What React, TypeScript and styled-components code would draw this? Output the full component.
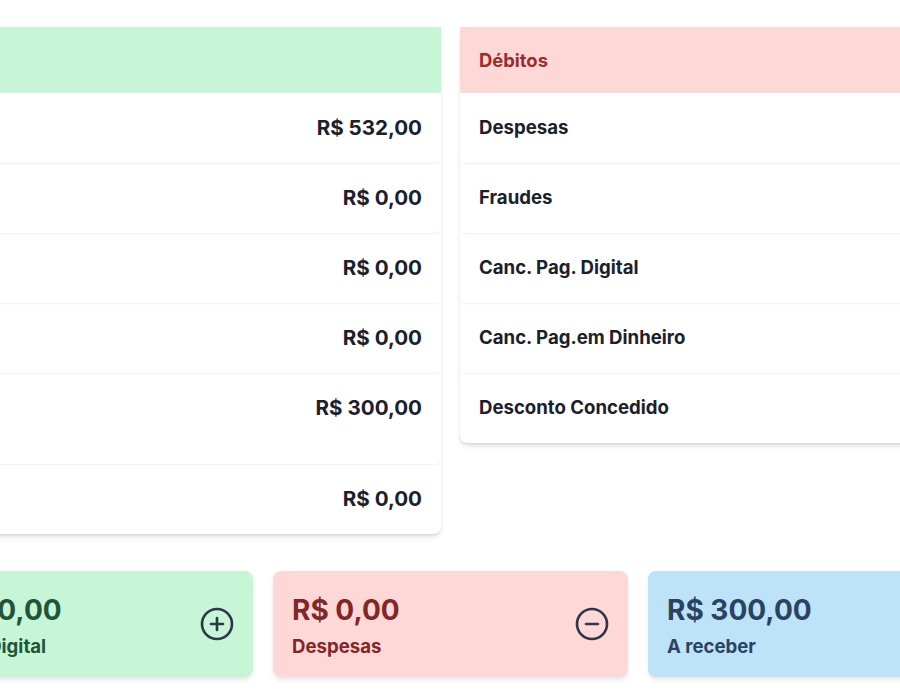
import React from "react";
import styled, { createGlobalStyle } from "styled-components";
import { CirclePlus, CircleMinus } from "lucide-react";

const Global = createGlobalStyle`
  html, body { margin: 0; padding: 0; background: #ffffff; }
  body { font-family: Inter, "Noto Sans", "Liberation Sans", sans-serif; color: #1a202c; }
  * { box-sizing: border-box; }
`;

const Viewport = styled.div`
  width: 900px;
  height: 700px;
  overflow: hidden;
`;

const Content = styled.div`
  width: 1105px;
  margin-left: -102px;
  padding-top: 27px;
`;

const Columns = styled.div`
  display: grid;
  grid-template-columns: 1fr 1fr;
  column-gap: 19px;
  align-items: start;
`;

const Card = styled.section`
  background: #ffffff;
  border-radius: 8px;
  box-shadow: 0 4px 6px -1px rgba(0, 0, 0, 0.1), 0 2px 4px -1px rgba(0, 0, 0, 0.06);
`;

const Header = styled.div<{ $tone: "green" | "red" }>`
  height: 66px;
  display: flex;
  align-items: center;
  padding: 0 19px;
  background: ${(p) => (p.$tone === "green" ? "#c6f6d5" : "#fed7d7")};
  color: ${(p) => (p.$tone === "green" ? "#22543d" : "#9b2c2c")};
  font-size: 18.4px;
  font-weight: 700;
`;

const Row = styled.div<{ $tall?: boolean }>`
  display: flex;
  justify-content: space-between;
  align-items: flex-start;
  min-height: ${(p) => (p.$tall ? "91px" : "70px")};
  padding: 21px 19px 0;
  border-radius: 6px;
  box-shadow: 0 1px 2px rgba(0, 0, 0, 0.06);
  line-height: 27px;
  font-weight: 700;
  color: #1a202c;
`;

const Label = styled.span`
  font-size: 18.6px;
`;

const Amount = styled.span`
  font-size: 20.6px;
  text-align: right;
`;

const Summary = styled.div`
  display: grid;
  grid-template-columns: repeat(3, 1fr);
  column-gap: 20px;
  margin-top: 37px;
`;

const tones = {
  green: { bg: "#c6f6d5", fg: "#22543d" },
  red: { bg: "#fed7d7", fg: "#822727" },
  blue: { bg: "#bee3f8", fg: "#2a4365" },
};

const Tile = styled.div<{ $tone: keyof typeof tones }>`
  height: 106px;
  display: flex;
  align-items: center;
  justify-content: space-between;
  padding: 0 18px 0 19px;
  border-radius: 8px;
  background: ${(p) => tones[p.$tone].bg};
  color: ${(p) => tones[p.$tone].fg};
  box-shadow: 0 4px 6px -1px rgba(0, 0, 0, 0.08), 0 2px 4px -1px rgba(0, 0, 0, 0.05);
`;

const TileText = styled.div`
  display: flex;
  flex-direction: column;
  gap: 6px;
  margin-top: 4px;
`;

const TileAmount = styled.div`
  font-size: 28px;
  line-height: 34px;
  font-weight: 700;
`;

const TileLabel = styled.div`
  font-size: 18.6px;
  line-height: 27px;
  font-weight: 700;
`;

const IconWrap = styled.div`
  color: #2d3748;
  display: flex;
`;

const credits: { amount: string; tall?: boolean }[] = [
  { amount: "R$ 532,00" },
  { amount: "R$ 0,00" },
  { amount: "R$ 0,00" },
  { amount: "R$ 0,00" },
  { amount: "R$ 300,00", tall: true },
  { amount: "R$ 0,00" },
];

const debits = [
  "Despesas",
  "Fraudes",
  "Canc. Pag. Digital",
  "Canc. Pag.em Dinheiro",
  "Desconto Concedido",
];

export default function App() {
  return (
    <>
      <Global />
      <Viewport>
        <Content>
          <Columns>
            <Card>
              <Header $tone="green"></Header>
              {credits.map((c, i) => (
                <Row key={i} $tall={c.tall}>
                  <Label></Label>
                  <Amount>{c.amount}</Amount>
                </Row>
              ))}
            </Card>
            <Card>
              <Header $tone="red">Débitos</Header>
              {debits.map((d) => (
                <Row key={d}>
                  <Label>{d}</Label>
                </Row>
              ))}
            </Card>
          </Columns>
          <Summary>
            <Tile $tone="green">
              <TileText>
                <TileAmount>R$ 300,00</TileAmount>
                <TileLabel>Crédito Digital</TileLabel>
              </TileText>
              <IconWrap>
                <CirclePlus size={36} strokeWidth={1.75} />
              </IconWrap>
            </Tile>
            <Tile $tone="red">
              <TileText>
                <TileAmount>R$ 0,00</TileAmount>
                <TileLabel>Despesas</TileLabel>
              </TileText>
              <IconWrap>
                <CircleMinus size={36} strokeWidth={1.75} />
              </IconWrap>
            </Tile>
            <Tile $tone="blue">
              <TileText>
                <TileAmount>R$ 300,00</TileAmount>
                <TileLabel>A receber</TileLabel>
              </TileText>
            </Tile>
          </Summary>
        </Content>
      </Viewport>
    </>
  );
}
